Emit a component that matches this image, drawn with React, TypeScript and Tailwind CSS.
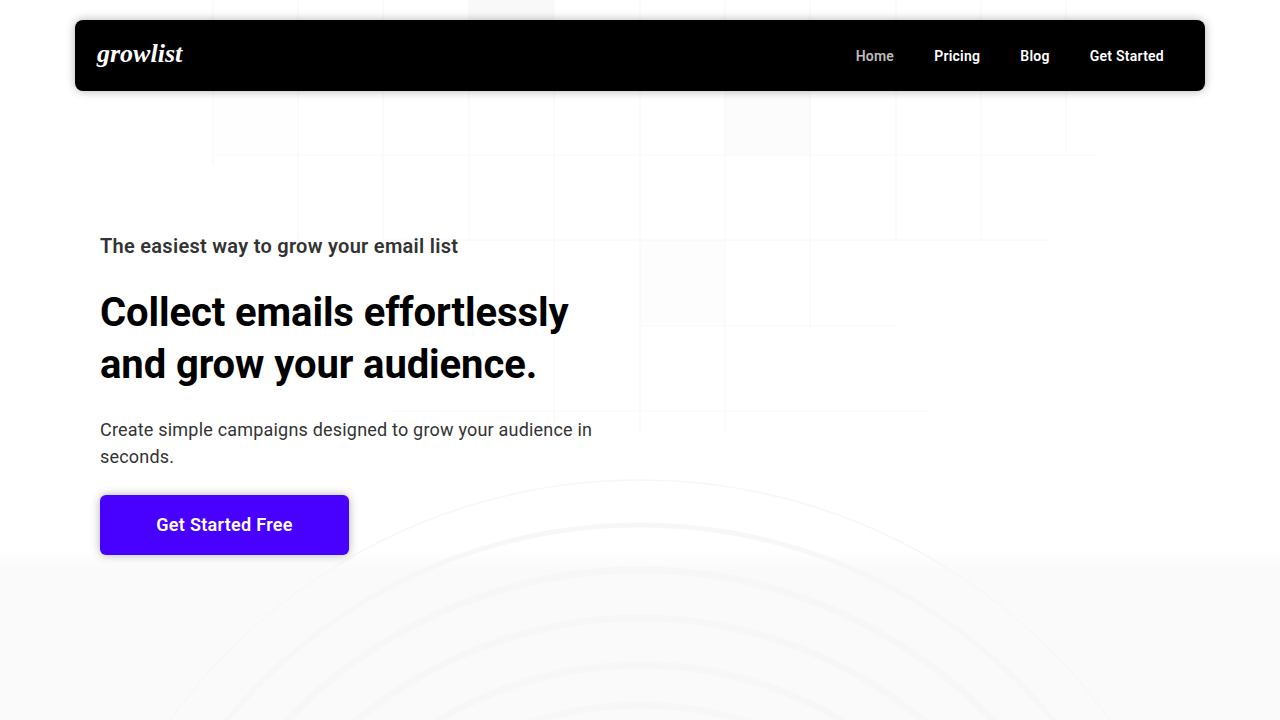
const navLinks = ["Home", "Pricing", "Blog", "Get Started"];

const vLines = [
  { x: 213, y2: 165 },
  { x: 298, y2: 240 },
  { x: 383, y2: 240 },
  { x: 469, y2: 240 },
  { x: 554, y2: 430 },
  { x: 640, y2: 430 },
  { x: 725, y2: 430 },
  { x: 810, y2: 326 },
  { x: 896, y2: 240 },
  { x: 981, y2: 240 },
  { x: 1066, y2: 150 },
];
const hLines = [
  { y: 155, x1: 213, x2: 1096 },
  { y: 240, x1: 383, x2: 1050 },
  { y: 326, x1: 640, x2: 895 },
  { y: 411, x1: 390, x2: 930 },
];
const rings = [
  { r: 580, w: 1.5 },
  { r: 535, w: 5 },
  { r: 490, w: 7 },
  { r: 442, w: 7 },
  { r: 395, w: 7 },
  { r: 355, w: 7 },
];

function GridBackdrop() {
  return (
    <svg className="absolute inset-0 h-full w-full" viewBox="0 0 1280 720" fill="none">
      <rect x="469" y="0" width="85" height="20" fill="#f9f9f9" />
      <rect x="725" y="91" width="85" height="64" fill="#fcfcfc" />
      <rect x="640" y="240" width="85" height="86" fill="#fdfdfd" />
      <rect x="213" y="91" width="85" height="64" fill="#fefefe" />
      {vLines.map((l) => (
        <line key={l.x} x1={l.x} y1="0" x2={l.x} y2={l.y2} stroke="#f7f7f7" />
      ))}
      {hLines.map((l) => (
        <line key={l.y} x1={l.x1} y1={l.y} x2={l.x2} y2={l.y} stroke="#f8f8f8" />
      ))}
      {rings.map((c) => (
        <circle key={c.r} cx="640" cy="1060" r={c.r} stroke="#f7f7f7" strokeWidth={c.w} />
      ))}
    </svg>
  );
}

export default function App() {
  return (
    <div className="relative flex h-[720px] flex-col overflow-hidden bg-white font-['Roboto',sans-serif]">
      <div className="absolute inset-x-0 bottom-0 h-[170px] bg-gradient-to-b from-white to-[#fafafa] to-[12%]" />
      <GridBackdrop />
      <div className="relative mx-auto w-[1130px] pt-5">
        <header className="flex h-[71px] items-center justify-between rounded-lg bg-black pl-[22px] pr-[21px] shadow-[0_0_10px_rgba(0,0,0,0.3)]">
          <a
            href="#home"
            className="-mt-1 font-['Liberation_Serif',serif] text-[26px] font-bold italic leading-none text-white"
          >
            growlist
          </a>
          <nav className="flex items-center gap-10 pr-5 text-sm font-semibold tracking-[0.25px] text-white">
            {navLinks.map((link, i) => (
              <a key={link} href="#" className={i === 0 ? "text-[#bdbdbd]" : ""}>
                {link}
              </a>
            ))}
          </nav>
        </header>
        <main className="px-[25px] pt-[141px]">
          <p className="text-xl font-semibold leading-[28px] tracking-[0.28px] text-[#333333]">
            The easiest way to grow your email list
          </p>
          <h1 className="mt-[27px] w-[520px] text-[40px] font-bold leading-[52px] tracking-[-0.1px] text-black">
            Collect emails effortlessly and grow your audience.
          </h1>
          <p className="mt-[25px] w-[510px] text-lg font-normal leading-[27px] tracking-[0.2px] text-[#333333]">
            Create simple campaigns designed to grow your audience in seconds.
          </p>
          <button
            type="button"
            className="mt-[25px] h-[60px] w-[249px] rounded-md bg-[#4800ff] text-lg font-semibold tracking-[0.3px] text-white shadow-[0_0_10px_rgba(0,0,0,0.3)]"
          >
            Get Started Free
          </button>
        </main>
      </div>
    </div>
  );
}
